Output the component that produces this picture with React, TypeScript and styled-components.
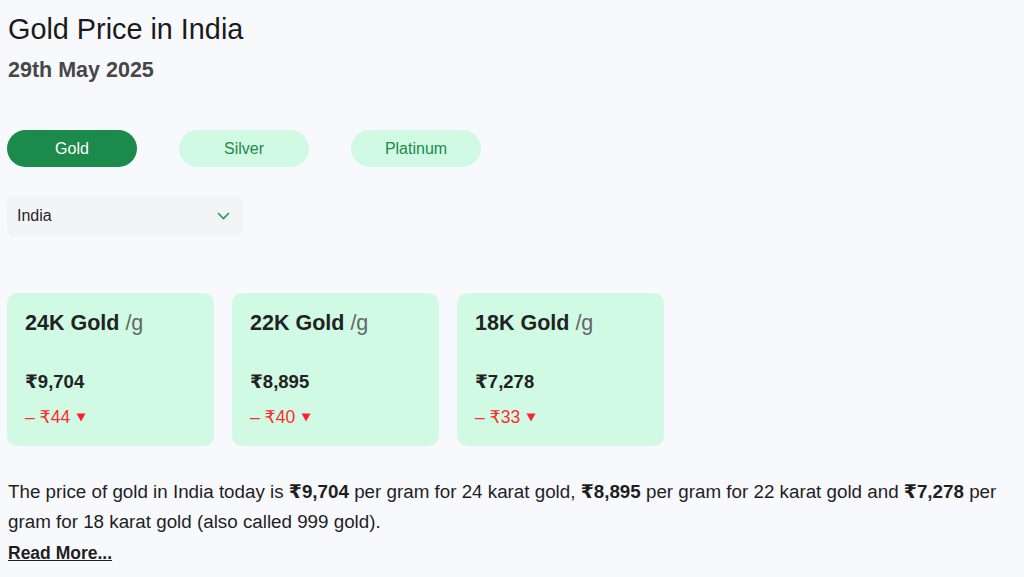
import styled, { createGlobalStyle } from "styled-components";

interface RateType {
  karat: string;
  price: string;
  change: string;
}

const rates: RateType[] = [
  { karat: "24K Gold", price: "₹9,704", change: "₹44" },
  { karat: "22K Gold", price: "₹8,895", change: "₹40" },
  { karat: "18K Gold", price: "₹7,278", change: "₹33" },
];

const metals = ["Gold", "Silver", "Platinum"];

const GlobalStyle = createGlobalStyle`
  * {
    box-sizing: border-box;
  }

  body {
    margin: 0;
    background: #f8f9fd;
    font-family: "Liberation Sans", Arial, "DejaVu Sans", sans-serif;
    color: #1f1f1f;
  }
`;

const Page = styled.main`
  padding: 13px 7px 0 7px;
`;

const Title = styled.h1`
  margin: 0 0 0 1px;
  font-size: 28.8px;
  font-weight: 400;
  line-height: 33px;
  color: #1a1a1a;
`;

const DateLine = styled.h2`
  margin: 12px 0 0 1px;
  font-size: 21.5px;
  font-weight: 700;
  line-height: 25px;
  color: #474747;
`;

const Tabs = styled.div`
  display: flex;
  gap: 42px;
  margin-top: 47px;
`;

const Tab = styled.button<{ $active?: boolean }>`
  width: 130px;
  height: 37px;
  padding: 0;
  border: none;
  border-radius: 19px;
  background: ${(p) => (p.$active ? "#1b8a4a" : "#d1fae5")};
  color: ${(p) => (p.$active ? "#ffffff" : "#1b8a4a")};
  font-family: inherit;
  font-size: 16px;
  cursor: pointer;
`;

const Select = styled.div`
  display: flex;
  align-items: center;
  justify-content: space-between;
  width: 236px;
  height: 40px;
  margin-top: 29px;
  padding: 0 13px 0 10px;
  border-radius: 8px;
  background: #f3f4f6;
  font-size: 16px;
  color: #262626;
`;

const Cards = styled.div`
  display: flex;
  gap: 18px;
  margin-top: 57px;
`;

const Card = styled.div`
  display: flex;
  flex-direction: column;
  width: 207px;
  height: 153px;
  padding: 18px 18px 0 18px;
  border-radius: 10px;
  background: #d1fae5;
`;

const CardTitle = styled.div`
  font-size: 21.5px;
  font-weight: 700;
  line-height: 24px;
  color: #222;
`;

const Unit = styled.span`
  font-weight: 400;
  color: #666;
`;

const Price = styled.div`
  margin-top: 36px;
  font-size: 18.5px;
  font-weight: 700;
  line-height: 22px;
  color: #222;
`;

const Change = styled.div`
  margin-top: 14px;
  display: flex;
  align-items: center;
  gap: 6px;
  font-size: 17.5px;
  line-height: 20px;
  color: #ff2b2b;
`;

const Text = styled.p`
  margin: 31px 0 0 1px;
  font-size: 18.8px;
  line-height: 30px;
  color: #1f1f1f;
`;

const ReadMore = styled.a`
  display: inline-block;
  margin: 6px 0 0 1px;
  font-size: 17.5px;
  font-weight: 700;
  line-height: 20px;
  color: #1f1f1f;
  text-decoration: underline;
`;

const Chevron = () => (
  <svg width="13" height="8" viewBox="0 0 13 8" fill="none">
    <path d="M1 1l5.5 5.5L12 1" stroke="#1f9d55" strokeWidth="1.6" />
  </svg>
);

const Down = () => (
  <svg width="10" height="9" viewBox="0 0 10 9">
    <path d="M0.5 0.5h9L5 8.5z" fill="#ff1f2f" />
  </svg>
);

const App = () => {
  return (
    <Page>
      <GlobalStyle />
      <Title>Gold Price in India</Title>
      <DateLine>29th May 2025</DateLine>
      <Tabs>
        {metals.map((metal) => (
          <Tab key={metal} $active={metal === "Gold"}>
            {metal}
          </Tab>
        ))}
      </Tabs>
      <Select>
        <span>India</span>
        <Chevron />
      </Select>
      <Cards>
        {rates.map((rate) => (
          <Card key={rate.karat}>
            <CardTitle>
              {rate.karat} <Unit>/g</Unit>
            </CardTitle>
            <Price>{rate.price}</Price>
            <Change>
              <span>– {rate.change}</span>
              <Down />
            </Change>
          </Card>
        ))}
      </Cards>
      <Text>
        The price of gold in India today is <b>₹9,704</b> per gram for 24 karat
        gold, <b>₹8,895</b> per gram for 22 karat gold and <b>₹7,278</b> per
        gram for 18 karat gold (also called 999 gold).
      </Text>
      <ReadMore href="#">Read More...</ReadMore>
    </Page>
  );
};

export default App;
